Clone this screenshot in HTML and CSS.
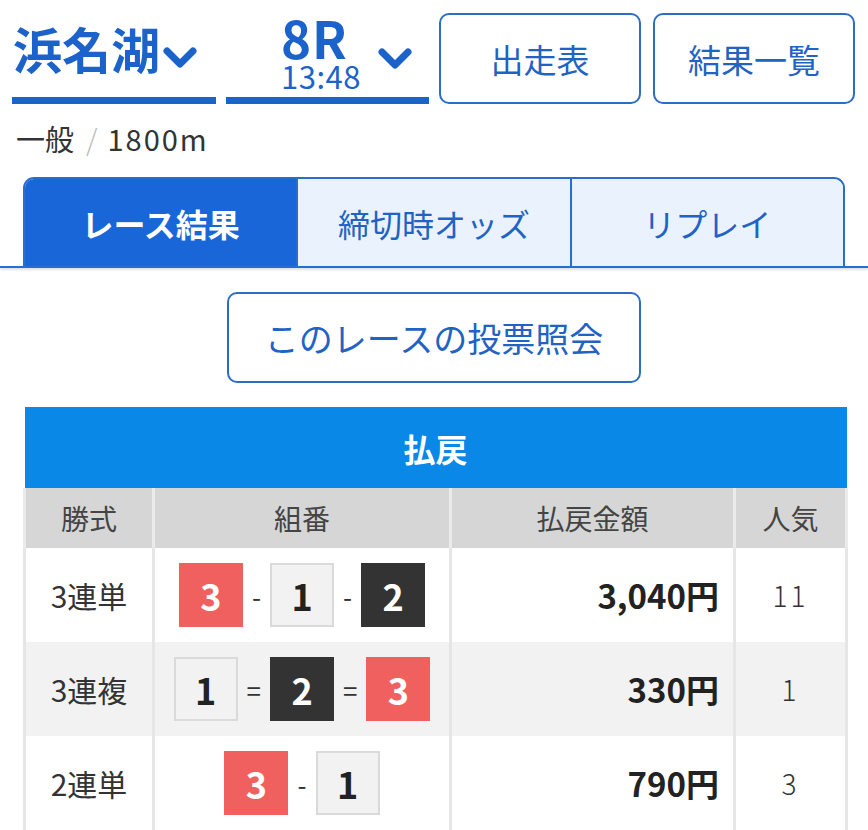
FILE: index.html
```html
<!DOCTYPE html>
<html lang="ja">
<head>
<meta charset="utf-8">
<title>レース結果</title>
<link rel="stylesheet" href="styles.css">
</head>
<body>
<header class="top">
  <div class="sel sel-venue">
    <span class="venue">浜名湖</span>
    <svg class="chev chev-venue" viewBox="0 0 36 26" width="36" height="26"><path d="M5 5 L18 18 L31 5" /></svg>
  </div>
  <div class="sel sel-race">
    <div class="race-block">
      <div class="race-num">8R</div>
      <div class="race-time">13:48</div>
    </div>
    <svg class="chev chev-race" viewBox="0 0 36 26" width="36" height="26"><path d="M5 5 L18 18 L31 5" /></svg>
  </div>
  <a class="btn btn-top">出走表</a>
  <a class="btn btn-top btn-last">結果一覧</a>
</header>
<div class="info">一般<span class="slash">/</span><span class="dist">1800m</span></div>
<nav class="tabbar">
  <div class="tabs">
    <div class="tab active">レース結果</div>
    <div class="tab">締切時オッズ</div>
    <div class="tab">リプレイ</div>
  </div>
</nav>
<div class="vote-wrap"><a class="btn btn-vote">このレースの投票照会</a></div>
<table class="pay">
  <colgroup>
    <col class="c1"><col class="c2"><col class="c3"><col class="c4">
  </colgroup>
  <thead>
    <tr><th colspan="4" class="title">払戻</th></tr>
    <tr class="head"><th>勝式</th><th>組番</th><th>払戻金額</th><th>人気</th></tr>
  </thead>
  <tbody>
    <tr>
      <td class="kind">3連単</td>
      <td class="combo"><span class="nums"><span class="b red">3</span><span class="sep">-</span><span class="b white">1</span><span class="sep">-</span><span class="b black">2</span></span></td>
      <td class="amt">3,040円</td>
      <td class="pop">11</td>
    </tr>
    <tr class="alt">
      <td class="kind">3連複</td>
      <td class="combo"><span class="nums"><span class="b white">1</span><span class="sep">=</span><span class="b black">2</span><span class="sep">=</span><span class="b red">3</span></span></td>
      <td class="amt">330円</td>
      <td class="pop">1</td>
    </tr>
    <tr>
      <td class="kind">2連単</td>
      <td class="combo"><span class="nums"><span class="b red">3</span><span class="sep">-</span><span class="b white">1</span></span></td>
      <td class="amt">790円</td>
      <td class="pop">3</td>
    </tr>
  </tbody>
</table>
</body>
</html>
```
FILE: styles.css
```css
* { box-sizing: border-box; }
html, body { margin: 0; padding: 0; background: #fff; }
body {
  font-family: "Noto Sans CJK JP", "Noto Sans", sans-serif;
  color: #333;
  width: 868px;
  overflow: hidden;
}

.top {
  display: flex;
  padding: 13px 13px 0 12px;
  gap: 10px;
  height: 104px;
}
.sel {
  display: flex;
  align-items: flex-start;
  border-bottom: 7px solid #1b63cb;
  height: 91px;
  color: #1b63cb;
}
.sel-venue { width: 204px; padding-left: 1px; }
.sel-race { width: 203px; padding-left: 55px; }

.venue {
  font-size: 49px;
  font-weight: 700;
  line-height: 48px;
  margin-top: 11px;
}
.chev { flex: none; }
.chev path {
  fill: none;
  stroke: #1b63cb;
  stroke-width: 7;
  stroke-linecap: round;
  stroke-linejoin: round;
}
.chev-venue { margin-top: 33px; margin-left: 2px; }
.race-block { width: 96px; padding-top: 4px; }
.race-num {
  font-size: 51px;
  font-weight: 700;
  line-height: 40px;
  letter-spacing: 1px;
}
.race-time {
  font-size: 31px;
  font-weight: 400;
  line-height: 26px;
  margin-top: 6px;
  letter-spacing: 0.5px;
}
.chev-race { margin-top: 34px; }

.btn {
  display: flex;
  align-items: center;
  justify-content: center;
  border: 2px solid #2c6dc8;
  border-radius: 10px;
  color: #1f63c4;
  text-decoration: none;
  font-weight: 400;
}
.btn-top {
  width: 202px;
  height: 91px;
  font-size: 33px;
}
.btn-last { margin-left: 2px; }

.info {
  margin-top: 14px;
  padding-left: 16px;
  font-size: 29px;
  line-height: 40px;
  color: #333;
}
.slash { color: #bbb; font-weight: 300; margin: 0 10px 0 12px; }
.dist { letter-spacing: 2px; }

.tabbar {
  margin-top: 19px;
  border-bottom: 2px solid #2a6dd0;
  box-shadow: 0 2px 2px rgba(0, 0, 0, 0.12);
  padding: 0 23px;
}
.tabs {
  display: flex;
  height: 89px;
  border: 2px solid #2a6dd0;
  border-bottom: none;
  border-radius: 11px 11px 0 0;
  overflow: hidden;
}
.tab {
  flex: 1;
  display: flex;
  align-items: center;
  justify-content: center;
  font-size: 32px;
  background: #eaf2fd;
  color: #1f63c4;
  border-left: 2px solid #2a6dd0;
}
.tab:first-child { border-left: none; }
.tab.active {
  background: #1866d8;
  color: #fff;
  font-weight: 700;
}

.vote-wrap {
  display: flex;
  justify-content: center;
  margin-top: 24px;
}
.btn-vote {
  width: 414px;
  height: 91px;
  font-size: 34px;
}

.pay {
  margin: 24px 23px 0;
  width: 822px;
  border-collapse: collapse;
  table-layout: fixed;
}
.c1 { width: 129px; }
.c2 { width: 297px; }
.c3 { width: 284px; }
.c4 { width: 112px; }

.pay th.title {
  background: #0a88e8;
  color: #fff;
  font-size: 32px;
  font-weight: 700;
  height: 81px;
  padding: 0;
}
.pay tr.head th {
  background: #d6d6d6;
  color: #444;
  font-size: 28px;
  font-weight: 400;
  height: 60px;
  padding: 0;
  border-left: 3px solid #ebebeb;
  border-right: 3px solid #ebebeb;
}
.pay td {
  height: 94px;
  padding: 0;
  border-left: 3px solid #e6e6e6;
  border-right: 3px solid #e6e6e6;
  text-align: center;
  vertical-align: middle;
}
.pay tr.alt td { background: #f2f2f2; }
.kind { font-size: 30px; color: #333; }
.amt {
  text-align: right !important;
  padding-right: 14px !important;
  font-size: 33px;
  font-weight: 700;
  color: #222;
}
.pop { font-size: 28px; font-weight: 300; color: #333; letter-spacing: 3px; }

.nums {
  display: inline-flex;
  align-items: center;
  vertical-align: middle;
}
.b {
  width: 64px;
  height: 64px;
  display: flex;
  align-items: center;
  justify-content: center;
  font-size: 36px;
  font-weight: 700;
  line-height: 1;
}
.b.red { background: #f0605f; color: #fff; }
.b.black { background: #333; color: #fff; }
.b.white { background: #f2f2f2; color: #222; border: 2px solid #dadada; }
.sep {
  margin: 0 9px;
  font-size: 26px;
  color: #333;
}
```
